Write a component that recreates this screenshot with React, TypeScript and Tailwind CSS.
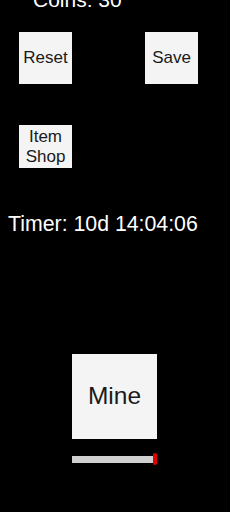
const font = { fontFamily: '"Liberation Sans", Arial, sans-serif' }

function Tile({ label, className }: { label: React.ReactNode; className: string }) {
  return (
    <button
      className={`flex items-center justify-center bg-[#f4f4f4] text-[#1a1a1a] text-center ${className}`}
    >
      {label}
    </button>
  )
}

export default function App() {
  return (
    <div
      style={font}
      className="w-[230px] h-[512px] bg-black overflow-hidden flex flex-col text-white"
    >
      {/* Coins counter, scrolled partly off the top */}
      <div className="-mt-[12px] pl-[33px] text-[21px] leading-[24px]">Coins: 30</div>

      {/* Reset / Save */}
      <div className="mt-[20px] flex justify-between pl-[19px] pr-[32px]">
        <Tile label="Reset" className="w-[53px] h-[52px] text-[17px]" />
        <Tile label="Save" className="w-[53px] h-[52px] text-[17px]" />
      </div>

      {/* Item shop */}
      <div className="mt-[41px] pl-[19px]">
        <Tile
          label={
            <span className="leading-[19.5px]">
              Item
              <br />
              Shop
            </span>
          }
          className="w-[53px] h-[43px] text-[17px]"
        />
      </div>

      {/* Timer */}
      <div className="mt-[44px] pl-[8px] text-[21.3px] leading-[24px]">Timer: 10d 14:04:06</div>

      {/* Mine button + progress */}
      <div className="mt-[118px] pl-[72px] flex flex-col">
        <Tile label="Mine" className="w-[85px] h-[85px] text-[24.5px]" />
        <div className="mt-[14px] relative w-[85px] h-[12px] flex items-center">
          <div className="w-[83px] h-[7px] bg-[#cfcfcf]" />
          <div className="absolute right-0 top-0 w-[4px] h-[12px] rounded-full bg-[#e00000]" />
        </div>
      </div>
    </div>
  )
}
